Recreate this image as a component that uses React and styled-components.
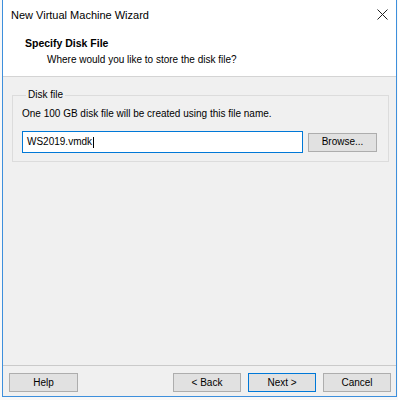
import styled, { createGlobalStyle } from "styled-components"

const Global = createGlobalStyle`
    html, body {
        margin: 0;
        padding: 0;
        background: #f8f8f8;
    }
    body {
        font-family: "Liberation Sans", Arial, sans-serif;
        font-size: 10px;
        color: #000;
    }
`

const Window = styled.div`
    box-sizing: border-box;
    margin-left: 2px;
    width: 395px;
    height: 397px;
    display: flex;
    flex-direction: column;
    background: #f0f0f0;
    border: 1px solid #3d8fdc;
    border-top: none;
`

const TitleBar = styled.div`
    height: 30px;
    flex-shrink: 0;
    display: flex;
    align-items: center;
    justify-content: space-between;
    padding: 0 8px 0 8px;
    background: #fff;
    font-size: 11px;
    line-height: 30px;
`

const CloseBtn = styled.svg`
    width: 11px;
    height: 11px;
    margin-top: -2px;
`

const Header = styled.div`
    height: 47px;
    flex-shrink: 0;
    box-sizing: border-box;
    background: #fff;
    padding: 6px 0 0 22px;
    border-bottom: 1px solid #d4d4d4;
`

const HeaderTitle = styled.div`
    font-weight: bold;
    font-size: 10.5px;
    line-height: 14px;
`

const HeaderSub = styled.div`
    margin: 3px 0 0 22px;
    line-height: 14px;
`

const Content = styled.div`
    flex: 1;
    padding: 11px 7px 0 9px;
`

const Group = styled.fieldset`
    margin: 0;
    padding: 5px 9px 8px 9px;
    border: 1px solid #dcdcdc;
    min-width: 0;
`

const Legend = styled.legend`
    padding: 0 2px;
    margin-left: 4px;
    line-height: 14px;
`

const Line = styled.div`
    line-height: 14px;
`

const InputRow = styled.div`
    display: flex;
    align-items: center;
    gap: 5px;
    margin-top: 10px;
`

const TextBox = styled.div`
    box-sizing: border-box;
    width: 281px;
    height: 22px;
    border: 1px solid #0078d7;
    background: #fff;
    padding-left: 4px;
    display: flex;
    align-items: center;
    line-height: 14px;
`

const Caret = styled.span`
    display: inline-block;
    width: 1px;
    height: 11px;
    background: #000;
    margin-left: 1px;
`

const Button = styled.div`
    box-sizing: border-box;
    width: ${p => p.$w || 68}px;
    height: 19px;
    display: flex;
    align-items: center;
    justify-content: center;
    background: #e1e1e1;
    border: 1px solid ${p => (p.$primary ? "#0078d7" : "#adadad")};
    line-height: 14px;
`

const Footer = styled.div`
    flex-shrink: 0;
    display: flex;
    align-items: center;
    padding: 7px 5px 4px 6px;
    border-top: 1px solid #cacaca;
`

const Right = styled.div`
    margin-left: auto;
    display: flex;
    gap: 7px;
`

const App = () => {
    return (
        <>
            <Global />
            <Window>
                <TitleBar>
                    <span>New Virtual Machine Wizard</span>
                    <CloseBtn viewBox="0 0 11 11">
                        <path d="M0.5 0.5 L10.5 10.5 M10.5 0.5 L0.5 10.5" stroke="#222" strokeWidth="1" fill="none" />
                    </CloseBtn>
                </TitleBar>
                <Header>
                    <HeaderTitle>Specify Disk File</HeaderTitle>
                    <HeaderSub>Where would you like to store the disk file?</HeaderSub>
                </Header>
                <Content>
                    <Group>
                        <Legend>Disk file</Legend>
                        <Line>One 100 GB disk file will be created using this file name.</Line>
                        <InputRow>
                            <TextBox>
                                WS2019.vmdk<Caret />
                            </TextBox>
                            <Button $w={69}>Browse...</Button>
                        </InputRow>
                    </Group>
                </Content>
                <Footer>
                    <Button $w={69}>Help</Button>
                    <Right>
                        <Button>&lt; Back</Button>
                        <Button $primary>Next &gt;</Button>
                        <Button>Cancel</Button>
                    </Right>
                </Footer>
            </Window>
        </>
    )
}

export default App
